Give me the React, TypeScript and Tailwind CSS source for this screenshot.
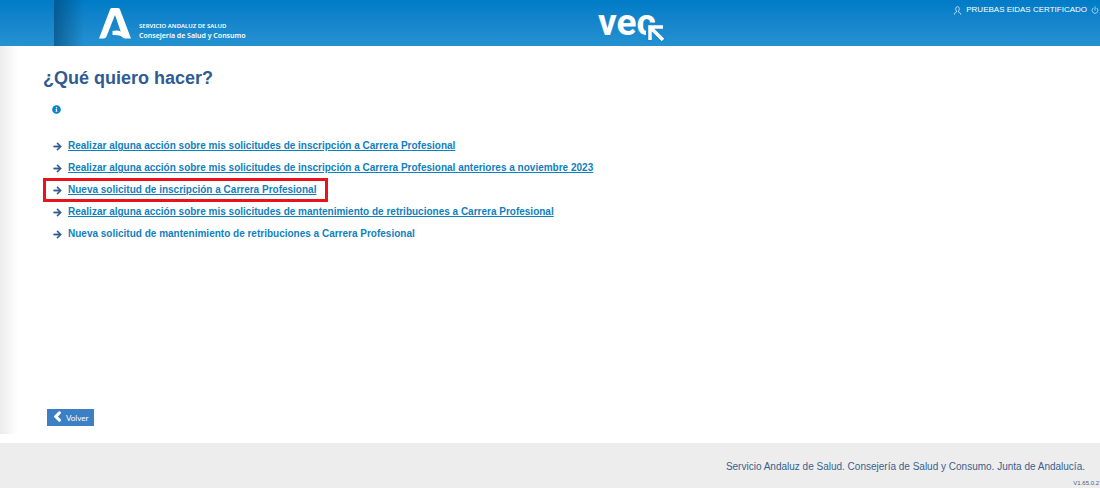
import { FaArrowRight, FaChevronLeft, FaInfoCircle } from "react-icons/fa";
import { Power } from "lucide-react";

const OPTIONS = [
  { label: "Realizar alguna acción sobre mis solicitudes de inscripción a Carrera Profesional" },
  {
    label:
      "Realizar alguna acción sobre mis solicitudes de inscripción a Carrera Profesional anteriores a noviembre 2023",
  },
  { label: "Nueva solicitud de inscripción a Carrera Profesional", highlighted: true },
  {
    label:
      "Realizar alguna acción sobre mis solicitudes de mantenimiento de retribuciones a Carrera Profesional",
  },
  { label: "Nueva solicitud de mantenimiento de retribuciones a Carrera Profesional", plain: true },
];

function JuntaLogo() {
  return (
    <svg viewBox="0 0 32 31" className="h-[31px] w-8 shrink-0" fill="#fff" aria-hidden="true">
      <path d="M13 0h6q1.400 0 2 1.400L32 30.500h-6q-1.500 0-2.500-1.200-2.500-2.700-10-2.300v-4q5-1 8.200.4L16 7 7.500 28.500q-.8 2-2.800 2H0L11 1.400Q11.600 0 13 0Z" />
    </svg>
  );
}

function VecLogo() {
  return (
    <svg viewBox="0 0 70 46" className="h-[46px] w-[70px]" role="img" aria-label="vec">
      <text x="0" y="35" fill="#fff" fontFamily="Roboto, sans-serif" fontWeight="700" fontSize="37">
        vec
      </text>
      <path d="M66 27H51v14M53 28l13 13" fill="none" stroke="#1a88cb" strokeWidth="6" />
      <path d="M65 27H52v13M53 28l12 12" fill="none" stroke="#fff" strokeWidth="3.500" />
    </svg>
  );
}

function UserIcon() {
  return (
    <svg
      viewBox="0 0 9 9"
      className="size-[9px]"
      fill="none"
      stroke="#c5e3f5"
      strokeWidth="0.9"
      aria-hidden="true"
    >
      <path d="M4.500.6C2.300.6 2.300 4 3.500 5v1L1.400 7.400v1.200M4.500.6C6.700.6 6.700 4 5.500 5v1l2.100 1.400v1.200" />
    </svg>
  );
}

function Header() {
  return (
    <header className="flex h-[46px] bg-linear-to-b from-[#007bc7] to-[#2491d0] text-white">
      <div className="flex flex-1">
        <div className="w-[54px] shrink-0" />
        <div className="flex flex-1 bg-linear-to-r from-[#00436f]/60 to-transparent to-[30px] pt-2 pl-[45px]">
          <JuntaLogo />
          <div className="pt-[14px] pl-2 font-['Noto_Sans',sans-serif] leading-[9px] font-semibold whitespace-nowrap">
            <p className="text-[6px]">SERVICIO ANDALUZ DE SALUD</p>
            <p className="text-[7px]">Consejería de Salud y Consumo</p>
          </div>
        </div>
      </div>
      <VecLogo />
      <div className="flex w-[432px] items-start justify-end gap-1 pt-1 pr-px text-[8px] leading-3">
        <span className="flex items-center gap-1">
          <UserIcon />
          PRUEBAS EIDAS CERTIFICADO
        </span>
        <button type="button" aria-label="Salir" className="pt-0.5">
          <Power className="size-2 stroke-3 text-[#9acdf0]" />
        </button>
      </div>
    </header>
  );
}

export default function App() {
  return (
    <div className="flex min-h-screen flex-col bg-white font-['Liberation_Sans',Arial,sans-serif]">
      <Header />
      <main className="flex flex-1 flex-col items-start bg-linear-to-r from-[#ececec] to-white to-[18px] pl-[43px]">
        <h1 className="pt-5 text-[18px] leading-6 font-bold text-[#2f5b93]">¿Qué quiero hacer?</h1>
        <button type="button" aria-label="Información" className="mt-[15px] ml-[9px]">
          <FaInfoCircle className="size-[9px] text-[#0b82c8]" />
        </button>
        <ul className="mt-[21px]">
          {OPTIONS.map(({ label, highlighted, plain }) => (
            <li
              key={label}
              className={
                highlighted
                  ? "-my-px flex h-6 w-fit items-center pr-3 pl-[10px] outline-3 -outline-offset-3 outline-[#e8131d]"
                  : "flex h-[22px] w-fit items-center pl-[10px]"
              }
            >
              <FaArrowRight className="mr-[6px] size-[9px] stroke-current stroke-[20px] text-[#2f5b93]" />
              <a
                href="#"
                className={
                  plain
                    ? "text-[10px] leading-3 font-bold text-[#0f7fc0]"
                    : "text-[10px] leading-3 font-bold text-[#0f7fc0] underline"
                }
              >
                {label}
              </a>
            </li>
          ))}
        </ul>
        <button
          type="button"
          className="mt-auto mb-2 ml-1 flex h-[17px] items-center gap-1 bg-[#3b7fc4] px-[6px] font-[Lato,sans-serif] text-[8px] text-white"
        >
          <FaChevronLeft className="-mt-0.5 h-[11px] w-[9px] stroke-current stroke-[60px]" />
          Volver
        </button>
      </main>
      <footer className="mt-[9px] flex h-[45px] flex-col items-end bg-[#ededed] text-[#3b5f8c]">
        <p className="pt-4 pr-[15px] text-[10px] leading-4">
          Servicio Andaluz de Salud. Consejería de Salud y Consumo. Junta de Andalucía.
        </p>
        <p className="mt-1 pr-px text-[6px] leading-[9px]">V1.65.0.2</p>
      </footer>
    </div>
  );
}
